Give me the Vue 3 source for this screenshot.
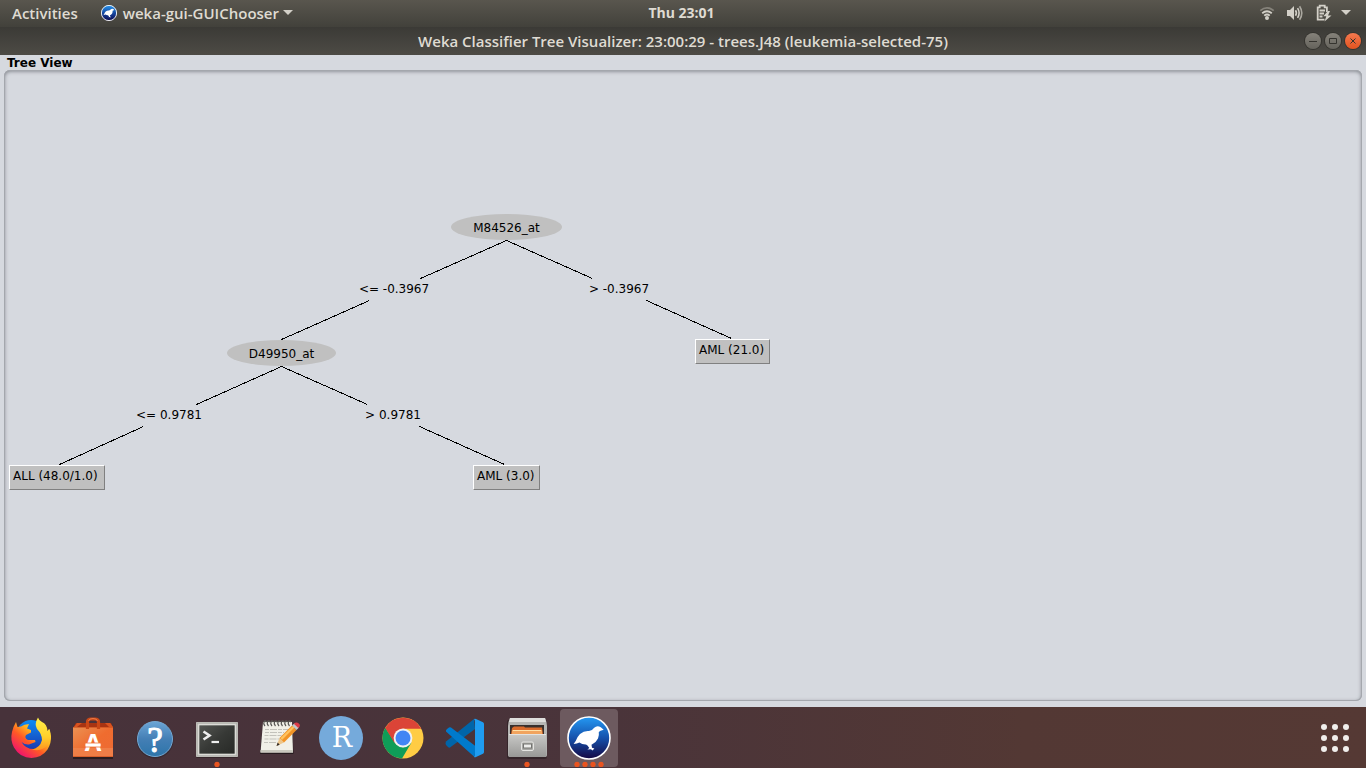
<script setup>
const nodes = [
  { kind: 'split', text: 'M84526_at', x: 447, y: 144, w: 111 },
  { kind: 'label', text: '<= -0.3967', x: 340, y: 208, w: 100 },
  { kind: 'label', text: '> -0.3967', x: 565, y: 208, w: 100 },
  { kind: 'split', text: 'D49950_at', x: 223, y: 270, w: 109 },
  { kind: 'leaf', text: 'AML (21.0)', x: 691, y: 269, w: 75 },
  { kind: 'label', text: '<= 0.9781', x: 115, y: 334, w: 100 },
  { kind: 'label', text: '> 0.9781', x: 339, y: 334, w: 100 },
  { kind: 'leaf', text: 'ALL (48.0/1.0)', x: 5, y: 395, w: 96 },
  { kind: 'leaf', text: 'AML (3.0)', x: 469, y: 395, w: 67 },
]

const edges = [
  [502, 170, 416, 208],
  [502, 170, 588, 208],
  [365, 230, 277, 269],
  [642, 230, 727, 268],
  [277, 296, 192, 334],
  [277, 296, 363, 334],
  [139, 356, 55, 394],
  [415, 356, 500, 394],
]

const apps = [
  { id: 'firefox', name: 'Firefox', windows: 0 },
  { id: 'software', name: 'Ubuntu Software', windows: 0 },
  { id: 'help', name: 'Help', windows: 0 },
  { id: 'terminal', name: 'Terminal', windows: 1 },
  { id: 'editor', name: 'Text Editor', windows: 0 },
  { id: 'rstudio', name: 'RStudio', windows: 0 },
  { id: 'chrome', name: 'Google Chrome', windows: 0 },
  { id: 'code', name: 'Visual Studio Code', windows: 0 },
  { id: 'files', name: 'Files', windows: 1 },
  { id: 'weka', name: 'Weka', windows: 4, active: true },
]

const gridDots = [4, 15, 26].flatMap((y) => [4, 15, 26].map((x) => [x, y]))
const bird = 'M43.7 20.8 40.8 18.2Q37 16 34.2 18.8 32 22 29 22 24 21.5 20 25 17 28 15.7 32L13.6 35Q17 34.6 19.4 33.4 22 35.6 26 35.5L27.5 36.5 29.3 39 27.4 40.5 31 40.2 32.5 41.4 34.4 39.5 32 38.7 31.5 35.8Q36 33.8 38 29.5 39.3 26 38.8 23L40.5 21.8Z'
</script>

<template>
  <div class="desktop">
    <header class="panel">
      <nav class="panel-left">
        <button type="button" class="panel-button">Activities</button>
        <button type="button" class="panel-button app-menu">
          <svg width="16" height="16" viewBox="7 7 44 44" aria-hidden="true">
            <circle cx="29" cy="29" r="21" fill="url(#wekaSmall)" stroke="#fff" stroke-width="2.5" />
            <path :d="bird" fill="#fff" />
            <defs>
              <linearGradient id="wekaSmall" x1="0" y1="0" x2="0" y2="1">
                <stop offset="0" stop-color="#2594ee" />
                <stop offset=".6" stop-color="#123a92" />
                <stop offset="1" stop-color="#0d0a4e" />
              </linearGradient>
            </defs>
          </svg>
          <span>weka-gui-GUIChooser</span>
          <svg class="menu-caret" width="10" height="6" viewBox="0 0 10 6" aria-hidden="true"><path d="M0 0h10L5 5z" fill="#d3d0c8" /></svg>
        </button>
      </nav>
      <button type="button" class="panel-button clock">Thu 23:01</button>
      <button type="button" class="panel-button status" aria-label="System menu">
        <svg width="16" height="16" viewBox="0 0 16 16" fill="none" stroke="#d3d0c8" stroke-width="1.8">
          <path d="M1.3 5.6Q8 .2 14.7 5.6" stroke="#85827a" />
          <path d="M3.2 8.2Q8 4.3 12.8 8.2" />
          <path d="M5.2 10.6Q8 8.4 10.8 10.6" />
          <circle cx="8" cy="13" r="2" fill="#d3d0c8" stroke="none" />
        </svg>
        <svg width="16" height="16" viewBox="0 0 16 16" fill="none" stroke="#d3d0c8" stroke-width="1.6">
          <path d="M0 5h3l4-4v14l-4-4H0z" fill="#d3d0c8" stroke="none" />
          <path d="M8.5 5.2Q10.3 8 8.5 10.8M10.6 3.2Q13.6 8 10.6 12.8" />
          <path d="M12.6 1.2Q17 8 12.6 14.8" stroke="#aaa79f" />
        </svg>
        <svg width="18" height="18" viewBox="0 0 18 18" fill="none" stroke="#d3d0c8" stroke-width="1.8">
          <path d="M9.500 15.6H2.7V3.4H4.700V1.7h5v1.7h2.200V8M4.500 6.5h5.500M4.500 9.5h4.500M4.500 12.5h3" />
          <path d="M13 7 8.300 12.2h3L9.500 17.5l7-6H13L15 7z" fill="#d3d0c8" stroke="none" />
        </svg>
        <svg class="status-caret" width="10" height="6" viewBox="0 0 10 6"><path d="M0 0h10L5 5z" fill="#d3d0c8" /></svg>
      </button>
    </header>

    <main class="window">
      <div class="titlebar">
        <h1>Weka Classifier Tree Visualizer: 23:00:29 - trees.J48 (leukemia-selected-75)</h1>
        <div class="controls">
          <button type="button" aria-label="Minimize"><svg viewBox="0 0 16 16"><path d="M4 8.5h8" /></svg></button>
          <button type="button" aria-label="Maximize"><svg viewBox="0 0 16 16"><path d="M4.5 5.5h7v5h-7z" /></svg></button>
          <button type="button" class="close" aria-label="Close"><svg viewBox="0 0 16 16"><path d="M5.5 5.5l5 5M10.5 5.5l-5 5" /></svg></button>
        </div>
      </div>
      <section class="tree-view">
        <h2>Tree View</h2>
        <div class="canvas">
          <svg class="edges" aria-hidden="true">
            <line v-for="(e, i) in edges" :key="i" :x1="e[0] + 0.5" :y1="e[1] + 0.5" :x2="e[2] + 0.5" :y2="e[3] + 0.5" />
          </svg>
          <div
            v-for="n in nodes"
            :key="n.text"
            :class="['node', n.kind]"
            :style="{ left: n.x + 'px', top: n.y + 'px', width: n.w + 'px' }"
          >{{ n.text }}</div>
        </div>
      </section>
    </main>

    <footer class="dock">
      <nav class="launchers">
        <button v-for="app in apps" :key="app.id" type="button" :class="['launcher', { active: app.active }]" :aria-label="app.name">
          <svg width="58" height="58" viewBox="0 0 58 58" aria-hidden="true">
            <g v-if="app.id === 'firefox'">
              <defs>
                <linearGradient id="ffBody" x1=".9" y1=".1" x2=".2" y2=".9">
                  <stop offset="0" stop-color="#ffe53b" /><stop offset=".35" stop-color="#ffb41f" />
                  <stop offset=".62" stop-color="#ff5a25" /><stop offset="1" stop-color="#f0146c" />
                </linearGradient>
                <linearGradient id="ffGlobe" x1=".5" y1="0" x2=".5" y2="1">
                  <stop offset="0" stop-color="#0a8cf5" /><stop offset="1" stop-color="#1c3bb0" />
                </linearGradient>
                <linearGradient id="ffTail" x1=".5" y1="0" x2=".5" y2="1">
                  <stop offset="0" stop-color="#fff04a" /><stop offset=".6" stop-color="#ffcf2a" /><stop offset="1" stop-color="#ff9320" />
                </linearGradient>
              </defs>
              <circle cx="29" cy="25.5" r="14.5" fill="url(#ffGlobe)" />
              <path d="M14 13Q11 18 10 23 8 31 12 38.5 18 49 29.5 49 40 48.5 45.5 40.5 49.5 34 49 27L47 20Q43 27 43 30 42 38 34 40 24 41 19.5 33Q23 36 27 35.5L33.5 33 33 31H26Q22 29 24 26L29 23.5 29 21 25 19.5 27 15Q22 15 19 17.5L15.5 18z" fill="url(#ffBody)" />
              <path d="M36 8.5Q32 15 35 20 40 25 40 31 38 39 30 40.5 40 43 45.5 36 50.5 28 47.5 20L45.5 22Q45 15 40 13 36.5 11 36 8.5z" fill="url(#ffTail)" />
            </g>
            <g v-else-if="app.id === 'software'">
              <defs>
                <linearGradient id="bag" x1="0" y1="0" x2="1" y2="1">
                  <stop offset="0" stop-color="#eb9254" /><stop offset=".5" stop-color="#ef6c2f" /><stop offset="1" stop-color="#ed6a34" />
                </linearGradient>
              </defs>
              <path d="M9 48h40v2H9z" fill="#2b1d20" />
              <path d="M12 14h35l2 5H9z" fill="#a83412" />
              <path d="M13 14h5l-5 4h-3zM41 14h5l3 4h-4z" fill="#d9531f" />
              <path d="M9 18h40v30H9z" fill="url(#bag)" />
              <path d="M9 39h40v9H9z" fill="#f08a55" opacity=".6" />
              <path d="M9 18.5h40M9 47.5h40" stroke="#c84d1c" opacity=".6" />
              <path d="M23.5 20v-7Q23.5 10 27 10h4Q34.5 10 34.5 13v7" fill="none" stroke="#ca4817" stroke-width="3.2" />
              <path d="M24.5 12Q25 9.500 29 9.500t4.500 2.500" fill="none" stroke="#ed7c49" />
              <text x="29" y="42" text-anchor="middle" class="glyph-a">A</text>
              <rect x="21" y="34" width="16" height="4" rx="1" fill="#fff" stroke="#ef7139" stroke-width=".8" />
            </g>
            <g v-else-if="app.id === 'help'">
              <defs>
                <linearGradient id="help" x1="0" y1="0" x2="0" y2="1">
                  <stop offset="0" stop-color="#6ba5d6" /><stop offset=".5" stop-color="#447fb5" /><stop offset="1" stop-color="#2d74a9" />
                </linearGradient>
              </defs>
              <circle cx="29" cy="31" r="18.5" fill="#2a1f28" opacity=".5" />
              <circle cx="29" cy="30" r="17.5" fill="url(#help)" stroke="#76a9d3" />
              <text x="29" y="43" text-anchor="middle" class="glyph-help">?</text>
            </g>
            <g v-else-if="app.id === 'terminal'">
              <defs>
                <linearGradient id="term" x1="0" y1="0" x2="1" y2="1">
                  <stop offset="0" stop-color="#545652" /><stop offset=".5" stop-color="#373936" /><stop offset="1" stop-color="#272926" />
                </linearGradient>
              </defs>
              <rect x="8" y="14" width="42" height="35" rx="1.5" fill="#2a1c20" opacity=".6" />
              <rect x="8" y="13" width="42" height="35" rx="1" fill="#d2d2cd" />
              <rect x="9" y="14" width="40" height="33" fill="none" stroke="#a3a39e" />
              <rect x="11" y="16" width="36" height="29" fill="url(#term)" stroke="#f0f0ec" stroke-width=".6" />
              <path d="M15.5 22.5l6 4-6 4" fill="none" stroke="#eee" stroke-width="2.6" />
              <path d="M23.5 33h7.5" stroke="#eee" stroke-width="2.2" />
            </g>
            <g v-else-if="app.id === 'editor'">
              <path d="M13 13h29l1.5 32H10z" fill="#251b1e" />
              <path d="M13 13h29l1 30.5H10.5z" fill="#f1f0e8" />
              <path d="M10.5 41h32.4l.1 2.5H10.5z" fill="#c9c8be" />
              <path d="M15 20.5h24M15 23.5h19M14.5 26.5h21M14.5 30h17M14 33.5h12" stroke="#c3c2bb" stroke-dasharray="4 1 7 1" />
              <path v-for="x in [15, 18.5, 22, 25.5, 29, 32.5, 36, 39.5]" :key="x" :d="`M${x} 17q-2-2-1-4t2.500 0`" fill="none" stroke="#575653" stroke-width="1.3" />
              <path d="M26.5 37l3-8 4.5 4.5z" fill="#edc68b" />
              <path d="M26.5 37l1.2-3.4 2 2.1z" fill="#332b25" />
              <path d="M29.5 29L42 16.5l4.5 4.5L34 33.5z" fill="#f19325" />
              <path d="M30.5 29L43 17l1.4 1.4L32 31z" fill="#ffc25d" />
              <path d="M42 16.5l2.5-2.3 4.5 4.4-2.5 2.4z" fill="#c6c9c8" />
              <path d="M43.8 14.8Q46.3 12.5 48.8 14.5T48.3 19z" fill="#db3c47" />
            </g>
            <g v-else-if="app.id === 'rstudio'">
              <circle cx="29" cy="29" r="22" fill="#75aadb" />
              <text x="30" y="38" text-anchor="middle" class="glyph-r">R</text>
            </g>
            <g v-else-if="app.id === 'chrome'">
              <circle cx="29" cy="29" r="20.5" fill="#fc4" />
              <path d="M11.25 18.75A20.5 20.5 0 0 1 47 19.5H29L20.5 34z" fill="#db4437" />
              <path d="M11.25 18.75A20.5 20.5 0 0 0 28 49.5L37.5 33.5 29 38.5 21 34z" fill="#0f9d58" />
              <path d="M11.25 18.75L20.5 34 21 29 25 19.5H47L46 18Q29 18 24 19z" fill="#db4437" />
              <circle cx="29" cy="29" r="9.4" fill="#f1f1f1" />
              <circle cx="29" cy="29" r="7.5" fill="#4285f4" />
            </g>
            <g v-else-if="app.id === 'code'">
              <path d="M10 32.5L38 10l1 10L14 38.5Q13 39 12 38l-2-2Q9 34.5 10 32.5z" fill="#0065a9" />
              <path d="M10 22.5Q9.5 21 11 20l2-1.5Q14 18 15 18.5L40 37.5 38.5 48z" fill="#007acc" />
              <path d="M38 10Q39 9.500 40 10l7 3.300Q48 13.800 48 15v28Q48 44.200 47 44.700L40 48Q39 48.500 38 48 39 47 39 45V13Q39 11 38 10z" fill="#1f9cf0" />
            </g>
            <g v-else-if="app.id === 'files'">
              <defs>
                <linearGradient id="drawer" x1="0" y1="0" x2="0" y2="1">
                  <stop offset="0" stop-color="#c9c9c7" /><stop offset="1" stop-color="#989896" />
                </linearGradient>
              </defs>
              <rect x="9" y="11" width="40" height="39" rx="2" fill="#281c20" opacity=".6" />
              <path d="M12 9h35q2 4 2 8v29q0 2-2 2H12q-2 0-2-2V17q0-4 2-8z" fill="#b6b6b4" />
              <path d="M12 9h35l1 4H11z" fill="#dededc" />
              <path d="M12 16h34v9H12z" fill="#38302d" />
              <path d="M14 19l2-1.5h10l1 1h17l1 6.5H13z" fill="#d96b2c" />
              <path d="M14 21h30v4H14z" fill="#f1a45f" />
              <path d="M15 21.5h28" stroke="#ffe1a8" />
              <path d="M11 25h37l.5 21q0 2-2 2h-34q-2 0-2-2z" fill="url(#drawer)" />
              <path d="M11 25.5h37" stroke="#e3e3e1" />
              <rect x="23.5" y="33" width="12" height="8.5" rx="1.5" fill="#a8a8a5" stroke="#e5e5e2" />
              <rect x="25.5" y="35" width="8" height="4" fill="#ededeb" stroke="#747471" />
            </g>
            <g v-else>
              <defs>
                <linearGradient id="weka" x1="0" y1="0" x2="0" y2="1">
                  <stop offset="0" stop-color="#2499f3" /><stop offset=".5" stop-color="#1551ac" /><stop offset="1" stop-color="#150742" />
                </linearGradient>
              </defs>
              <circle cx="29" cy="29" r="21" fill="url(#weka)" stroke="#fff" stroke-width="1.6" />
              <path :d="bird" fill="#fff" />
            </g>
            <circle v-for="n in app.windows" :key="n" :cx="29 + (n - 1) * 8 - (app.windows - 1) * 4" cy="55.5" r="2.7" fill="#e95420" />
          </svg>
        </button>
      </nav>
      <button type="button" class="show-apps" aria-label="Show Applications">
        <svg width="30" height="30" viewBox="0 0 30 30" aria-hidden="true">
          <circle v-for="(d, i) in gridDots" :key="i" :cx="d[0]" :cy="d[1]" r="3" fill="#f1efec" />
        </svg>
      </button>
    </footer>
  </div>
</template>

<style>
body {
  margin: 0;
}
</style>

<style scoped>
.desktop {
  display: flex;
  flex-direction: column;
  height: 100vh;
  font-family: "Open Sans", "Noto Sans", sans-serif;
  background: #d6d9df;
}
button {
  margin: 0;
  padding: 0;
  border: 0;
  background: none;
  color: inherit;
  font: inherit;
}
svg {
  display: block;
}
.panel {
  flex: none;
  box-sizing: border-box;
  display: grid;
  grid-template-columns: 1fr auto 1fr;
  align-items: center;
  height: 27px;
  padding: 0 15px 1px 12px;
  background: linear-gradient(#59564e, #42413b);
  color: #dfdbd2;
  font-size: 15px;
  font-weight: 600;
  line-height: 20px;
}
.panel-left {
  display: flex;
  gap: 23px;
}
.panel-button {
  white-space: nowrap;
}
.clock {
  font-size: 14px;
  font-weight: 700;
}
.app-menu {
  display: flex;
  align-items: center;
  gap: 6px;
}
.menu-caret {
  margin-left: -2px;
}
.status {
  justify-self: end;
  display: flex;
  align-items: center;
  gap: 12px;
}
.status-caret {
  margin-left: -4px;
}
.window {
  flex: 1;
  display: flex;
  flex-direction: column;
  min-height: 0;
}
.titlebar {
  flex: none;
  display: grid;
  grid-template-columns: 1fr auto 1fr;
  align-items: center;
  height: 28px;
  padding: 0 5px;
  background: linear-gradient(#3b3a36, #4d4b45);
  color: #dfdbd2;
}
.titlebar h1 {
  grid-column: 2;
  margin: 0;
  font-size: 15px;
  font-weight: 600;
  line-height: 20px;
}
.controls {
  justify-self: end;
  display: flex;
  gap: 4px;
}
.controls button {
  width: 16px;
  height: 16px;
  border-radius: 50%;
  background: linear-gradient(#85827a, #65635c);
  box-shadow: 0 0 0 1px #35342f;
}
.controls .close {
  background: linear-gradient(#f5794f, #e2531f);
}
.controls path {
  fill: none;
  stroke: #35342f;
}
.tree-view {
  flex: 1;
  display: flex;
  flex-direction: column;
  min-height: 0;
  padding: 0 4px 6px;
  color: #000;
  font-family: "DejaVu Sans", sans-serif;
  font-size: 12px;
}
.tree-view h2 {
  margin: 0;
  padding: 2px 0 0 3px;
  font-size: 12px;
  font-weight: 700;
  line-height: 13px;
}
.canvas {
  position: relative;
  flex: 1;
  border-radius: 6px;
  box-shadow: inset 0 0 0 1px #a4a7ad, inset 0 1px 4px #6f7279;
}
.edges {
  position: absolute;
  inset: 0;
  width: 100%;
  height: 100%;
}
.edges line {
  stroke: #000;
  shape-rendering: crispEdges;
}
.node {
  position: absolute;
  box-sizing: border-box;
  text-align: center;
  white-space: nowrap;
}
.split {
  height: 26px;
  border-radius: 50%;
  background: #c0c0c0;
  line-height: 28px;
}
.label {
  line-height: 22px;
}
.leaf {
  height: 25px;
  padding-left: 3px;
  border: 1px solid;
  border-color: #fff #808080 #808080 #fff;
  background: #c0c0c0;
  line-height: 20px;
  text-align: left;
}
.dock {
  flex: none;
  display: flex;
  justify-content: space-between;
  align-items: center;
  height: 61px;
  padding: 0 16px 0 2px;
  background: linear-gradient(90deg, #47323a, #4a343a 45%, #533834 75%, #553934);
}
.launchers {
  display: flex;
  gap: 4px;
}
.launcher {
  border-radius: 4px;
}
.launcher.active {
  background: #6d5a5f;
}
.glyph-a {
  fill: #fff;
  font: 700 24px "Open Sans", sans-serif;
}
.glyph-help {
  fill: #fff;
  stroke: #fff;
  font: 35px "Liberation Serif", serif;
}
.glyph-r {
  fill: #fff;
  font: 27px "DejaVu Serif", serif;
}
</style>
